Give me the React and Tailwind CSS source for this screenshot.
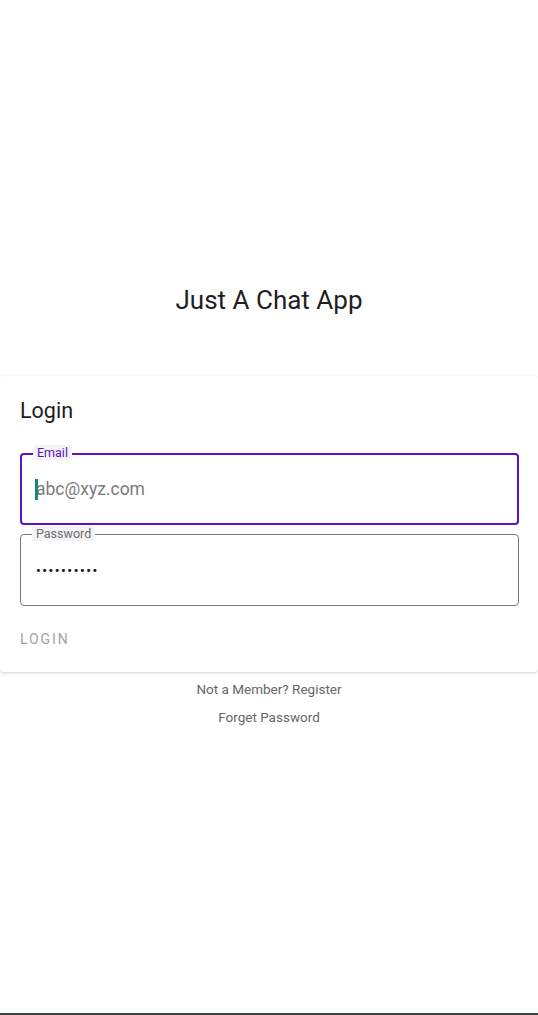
import React from "react";

function Field({ label, focused, children }) {
  return (
    <div
      className={`relative h-[72px] rounded-[4px] ${
        focused ? "border-2 border-[#5a12c2]" : "border border-[#7a7a7a]"
      }`}
    >
      {/* notched label */}
      <span
        className={`absolute left-[11px] px-[4px] bg-[#f4f3f6] text-[12.5px] leading-[15px] ${
          focused ? "-top-[10px] text-[#5a12c2]" : "-top-[9px] text-[#6b6b6b]"
        }`}
      >
        {label}
      </span>
      {children}
    </div>
  );
}

export default function App() {
  return (
    <div
      className="h-[1015px] w-full bg-white flex flex-col items-center relative"
      style={{ fontFamily: "Roboto, 'Liberation Sans', sans-serif" }}
    >
      <h1 className="mt-[283px] text-[26px] leading-[34px] text-[#1f1f1f] font-normal">
        Just A Chat App
      </h1>

      {/* Login card */}
      <div className="mt-[59px] w-full bg-white rounded-[4px] shadow-[0_1px_3px_rgba(0,0,0,0.18)] pl-[20px] pr-[19px] pt-[21px] pb-[15px]">
        <h2 className="text-[21.5px] leading-[28px] text-[#1c1c1c] font-normal">Login</h2>

        <div className="mt-[28px]">
          <Field label="Email" focused>
            <div className="relative h-full flex items-center pl-[14px]">
              <span className="absolute left-[13px] top-[24px] w-[3px] h-[21px] bg-[#14897b]" />
              <input
                className="w-full outline-none bg-transparent text-[17.5px] text-[#222] placeholder:text-[#7b7b7b]"
                placeholder="abc@xyz.com"
              />
            </div>
          </Field>
        </div>

        <div className="mt-[9px]">
          <Field label="Password">
            <div className="h-full flex items-center pl-[15px]">
              <span className="text-[13px] tracking-[1.6px] text-[#111] font-bold leading-none">
                ••••••••••
              </span>
            </div>
          </Field>
        </div>

        <button className="mt-[15px] h-[36px] flex items-center text-[14px] tracking-[1.9px] text-[#a4a4a4] uppercase">
          Login
        </button>
      </div>

      <p className="mt-[8px] text-[13.5px] leading-[18px] text-[#666]">Not a Member? Register</p>
      <p className="mt-[10px] text-[13.5px] leading-[18px] text-[#666]">Forget Password</p>

      <div className="absolute bottom-0 left-0 w-full h-[2px] bg-[#3d4448]" />
    </div>
  );
}
